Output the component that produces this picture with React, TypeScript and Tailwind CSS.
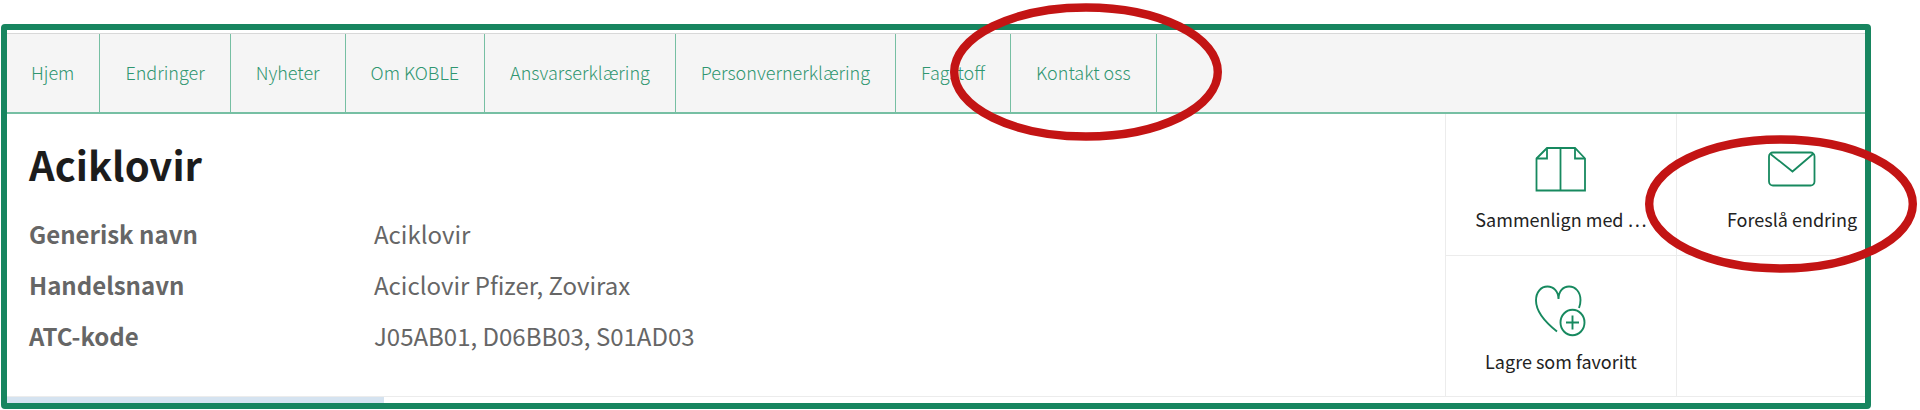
import type { ReactNode } from "react";

const NAV_ITEMS = [
  "Hjem",
  "Endringer",
  "Nyheter",
  "Om KOBLE",
  "Ansvarserklæring",
  "Personvernerklæring",
  "Fagstoff",
  "Kontakt oss",
];

const FACTS = [
  { label: "Generisk navn", value: "Aciklovir" },
  { label: "Handelsnavn", value: "Aciclovir Pfizer, Zovirax" },
  { label: "ATC-kode", value: "J05AB01, D06BB03, S01AD03" },
];

function CompareIcon() {
  return (
    <svg width="52" height="52" viewBox="0 0 52 52" fill="none" stroke="#17895f" strokeWidth="1.8" aria-hidden="true">
      <path d="M1.5 13.5 L12 3 H40 L50 13.5 V45.5 H1.5 Z" />
      <path d="M12 3 V13.5 H1.5 M40 3 V13.5 H50 M25.5 3 V45.5" />
    </svg>
  );
}

function MailIcon() {
  return (
    <svg width="52" height="52" viewBox="0 0 52 52" fill="none" stroke="#17895f" strokeWidth="1.8" aria-hidden="true">
      <rect x="3" y="7.5" width="45.5" height="33" rx="4" />
      <path d="M4.5 9 L26.5 26.5 L47 9" />
    </svg>
  );
}

function FavoriteIcon() {
  return (
    <svg
      width="52"
      height="52"
      viewBox="0 3 52 52"
      fill="none"
      stroke="#17895f"
      strokeWidth="1.9"
      className="overflow-visible"
      aria-hidden="true"
    >
      <path d="M22 47.5 C12.5 40 1 28.5 1 16.5 C1 8 6 2.5 12.5 2.5 C18.5 2.5 23.5 7.5 23.5 15 C23.5 7.5 28 2.5 34 2.5 C40.5 2.5 45.5 8 45.5 16 C45.5 19 45 21.5 44 24" />
      <ellipse cx="37.5" cy="38.5" rx="12" ry="12.7" />
      <path d="M37.5 31.5 V45.5 M31 38.5 H44" />
    </svg>
  );
}

function Action({ icon, label }: { icon: ReactNode; label: string }) {
  return (
    <button type="button" className="flex flex-col items-center border-b border-l border-[#ececec] pt-[31px]">
      {icon}
      <span className="mt-[10px] text-[18px] leading-6 whitespace-nowrap text-[#222]">{label}</span>
    </button>
  );
}

function Ring() {
  return (
    <svg width="272" height="138" viewBox="0 0 272 138" fill="none" aria-hidden="true">
      <ellipse cx="136" cy="69" rx="131.8" ry="64.5" stroke="#c31414" strokeWidth="8.4" />
    </svg>
  );
}

export default function App() {
  return (
    <div className="relative overflow-hidden bg-white pt-6 pr-[49px] pb-px pl-px font-['Noto_Sans_CJK_SC',sans-serif]">
      <div className="rounded-[4px] border-[6px] border-[#17855f] pt-[3px]">
        <nav className="border-t border-b-2 border-t-[#d8d8d8] border-b-[#76bfa3] bg-[#f5f5f5]">
          <ul className="flex">
            {NAV_ITEMS.map((item) => (
              <li key={item} className="border-r border-[#76bfa3] first:-ml-px">
                <a
                  href="#"
                  className="block px-[25px] pb-[2px] text-[18px] leading-[76px] font-light whitespace-nowrap text-[#2f9670]"
                >
                  {item}
                </a>
              </li>
            ))}
          </ul>
        </nav>

        <div className="flex">
          <main className="min-w-0 flex-1 border-b border-[#ececec] pl-[22px]">
            <h1 className="pt-[22px] text-[40px] leading-[56px] font-bold text-[#1c1c1c]">Aciklovir</h1>
            <dl className="mt-4 text-[24px] leading-[51px] text-[#666]">
              {FACTS.map((fact) => (
                <div key={fact.label} className="flex">
                  <dt className="w-[345px] font-bold">{fact.label}</dt>
                  <dd>{fact.value}</dd>
                </div>
              ))}
            </dl>
          </main>

          <aside className="grid w-[420px] grid-cols-[231px_231px] grid-rows-[142px_141px] overflow-hidden">
            <Action icon={<CompareIcon />} label="Sammenlign med …" />
            <Action icon={<MailIcon />} label="Foreslå endring" />
            <Action icon={<FavoriteIcon />} label="Lagre som favoritt" />
            <div className="border-b border-l border-[#ececec]" />
          </aside>
        </div>

        <div className="h-[6px] w-[377px] bg-[#d5e3f0]" />
      </div>

      {/* hand-drawn highlights over the two contact points */}
      <div className="pointer-events-none absolute top-[3px] left-[950px]">
        <Ring />
      </div>
      <div className="pointer-events-none absolute top-[135px] right-[3px]">
        <Ring />
      </div>
    </div>
  );
}
